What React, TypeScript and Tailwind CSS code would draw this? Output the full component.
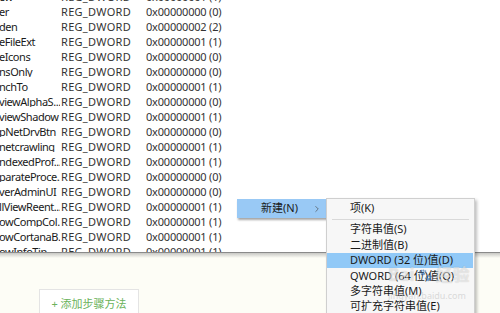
import { ChevronRight } from "lucide-react";

const rows: [string, string][] = [
  ["ew", "0x00000001 (1)"],
  ["er", "0x00000000 (0)"],
  ["den", "0x00000002 (2)"],
  ["eFileExt", "0x00000001 (1)"],
  ["eIcons", "0x00000000 (0)"],
  ["nsOnly", "0x00000000 (0)"],
  ["nchTo", "0x00000001 (1)"],
  ["viewAlphaS...", "0x00000000 (0)"],
  ["viewShadow", "0x00000001 (1)"],
  ["pNetDrvBtn", "0x00000000 (0)"],
  ["netcrawling", "0x00000001 (1)"],
  ["ndexedProf...", "0x00000001 (1)"],
  ["parateProce...", "0x00000000 (0)"],
  ["verAdminUI", "0x00000000 (0)"],
  ["llViewReent...", "0x00000001 (1)"],
  ["owCompCol...", "0x00000001 (1)"],
  ["owCortanaB...", "0x00000001 (1)"],
  ["owInfoTip", "0x00000001 (1)"],
];

const subItems = [
  "字符串值(S)",
  "二进制值(B)",
  "DWORD (32 位)值(D)",
  "QWORD (64 位)值(Q)",
  "多字符串值(M)",
  "可扩充字符串值(E)",
];

export default function App() {
  return (
    <div
      className="relative w-[500px] h-[313px] overflow-hidden bg-[#fdfdf6] text-[#1a1a1a]"
      style={{ fontFamily: '"Noto Sans", "Noto Sans CJK SC", sans-serif' }}
    >
      {/* Registry values list */}
      <div className="h-[253px] overflow-hidden bg-white border-b border-[#8a8a8a]">
        <div className="-mt-[11px] text-[11px]">
          {rows.map(([name, value], i) => (
            <div key={i} className="flex items-center h-[15px] leading-none">
              <span className="w-[61px] -ml-[1px] whitespace-nowrap overflow-hidden tracking-[-0.45px]">{name}</span>
              <span className="w-[85px] ml-[1px] text-[#333] tracking-[0.3px]">REG_DWORD</span>
              <span className="text-[#333] tracking-[-0.2px]">{value}</span>
            </div>
          ))}
        </div>
      </div>
      <div className="h-[5px] bg-gradient-to-b from-[#c8c8c4] to-[#fdfdf6]" />

      {/* Add step button */}
      <div className="mt-[31px] ml-[39px] w-[100px] h-[30px] bg-white border border-[#e4e4e4] flex items-center justify-center text-[11px] text-[#6ab25a]">
        + 添加步骤方法
      </div>

      {/* Context menu: parent item */}
      <div className="absolute left-[237px] top-[199px] w-[90px] h-[19px] bg-[#99c9f5] shadow-[1px_2px_2px_rgba(0,0,0,0.35)] flex items-center text-[11px]">
        <span className="ml-[24px]">新建(N)</span>
        <ChevronRight className="ml-auto mr-[5px] w-[10px] h-[10px] text-[#444]" strokeWidth={1.5} />
      </div>

      {/* Submenu */}
      <div className="absolute left-[326px] top-[198px] w-[149px] h-[130px] bg-[#f7f7f7] border border-[#cfcfcf] shadow-[2px_2px_3px_rgba(0,0,0,0.25)] text-[11px] pt-[2px]">
        <div className="h-[15px] flex items-center pl-[23px]">项(K)</div>
        <div className="mx-[5px] mt-[3px] mb-[2px] h-px bg-[#d9d9d9]" />
        {subItems.map((s, i) => (
          <div
            key={s}
            className={`h-[15.4px] flex items-center pl-[23px] ${i === 2 ? "bg-[#91c9f7] mr-[1px]" : ""}`}
          >
            {s}
          </div>
        ))}
      </div>

      {/* watermark */}
      <div
        className="absolute left-[388px] top-[262px] text-[17px] font-bold text-white/50 pointer-events-none flex items-center gap-[3px]"
        style={{ textShadow: "0 0 1px rgba(0,0,0,0.2)" }}
      >
        <span>Bai</span>
        <span className="text-[12px]">🐾</span>
        <span>经验</span>
      </div>
      <div className="absolute left-[388px] top-[289px] text-[9px] text-[#c4c4c4]/60 pointer-events-none">
        jingyan.baidu.com
      </div>
    </div>
  );
}
